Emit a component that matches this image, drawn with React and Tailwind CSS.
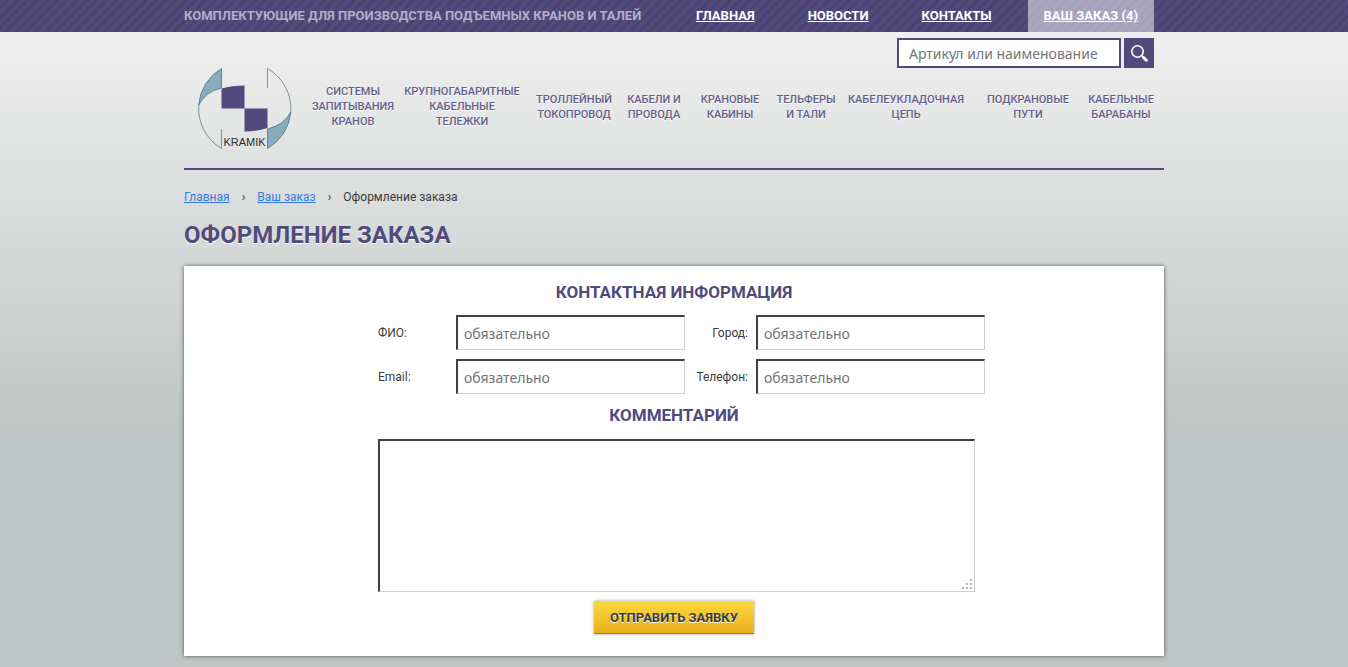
import React from "react";

const menu = [
  ["Главная", "/"],
  ["Новости", "/news"],
  ["Контакты", "/contacts"],
];

const catalog = [
  ["Системы", "запитывания", "кранов"],
  ["Крупногабаритные", "кабельные", "тележки"],
  ["Троллейный", "токопровод"],
  ["Кабели и", "провода"],
  ["Крановые", "кабины"],
  ["Тельферы", "и тали"],
  ["Кабелеукладочная", "цепь"],
  ["Подкрановые", "пути"],
  ["Кабельные", "барабаны"],
];

const Logo = () => (
  <svg width="94" height="82" viewBox="0 0 94 82" role="img" aria-label="Kramik">
    <path d="M23.5 .5A46.5 46.5 0 0 0 .7 37Q7 24 23.5 20Z" fill="#88acb9" stroke="#4f7480" strokeWidth=".8" />
    <path d="M69.5 80.5A46.5 46.5 0 0 0 92.8 44Q86 57 69.5 61Z" fill="#88acb9" stroke="#4f7480" strokeWidth=".8" />
    <path
      d="M69.5 20V.5A46.5 46.5 0 0 1 92.8 44M23.5 61V80.5A46.5 46.5 0 0 1 .7 37"
      fill="none"
      stroke="#8b8f92"
    />
    <path d="M23.5 20.5Q34 17.5 46.5 17.5V40.5H69.5V60Q59 63.5 46.5 63.5V40.5H23.5Z" fill="#524a7c" />
    <text x="46.5" y="78" textAnchor="middle" fontSize="11" fill="#2b2b2b" fontFamily="'Liberation Sans', sans-serif">
      KRAMIK
    </text>
  </svg>
);

const Field = ({ id, label, type = "text", right }) => (
  <>
    <label htmlFor={id} className={right ? "pr-2 text-right" : ""}>
      {label}:
    </label>
    <input
      id={id}
      type={type}
      placeholder="обязательно"
      className="h-[35px] w-full min-w-0 border-t-2 border-l-2 border-r border-b border-t-[#414141] border-l-[#414141] border-r-[#cfcfc6] border-b-[#cfcfc6] bg-white px-1.5 font-['Noto_Sans',sans-serif] text-sm outline-none placeholder:text-[#757575]"
    />
  </>
);

const App = () => {
  return (
    <div className="min-h-screen bg-[#bfc5c4] bg-[linear-gradient(#efefef_32px,#bfc5c4_435px)] pb-2.5 font-['Roboto',sans-serif] text-xs text-[#3b3b3b]">
      <header>
        {/* Top bar */}
        <div className="bg-[#524a7c] bg-[repeating-linear-gradient(135deg,#524a7c_0px,#524a7c_4px,#49436c_5px,#49436c_6px,#524a7c_7px)]">
          <div className="mx-auto flex h-8 max-w-[980px] items-center justify-between pr-2.5 text-[13px] font-bold uppercase">
            <p className="whitespace-nowrap text-[#b3aec6]">
              Комплектующие для производства подъемных кранов и талей
            </p>
            <nav className="flex h-full gap-[19px] whitespace-nowrap text-white">
              {menu.map(([name, href]) => (
                <a key={href} href={href} className="flex items-center px-[17px] underline">
                  {name}
                </a>
              ))}
              <a href="/cart" className="flex items-center bg-white/50 px-4 underline">
                Ваш заказ (4)
              </a>
            </nav>
          </div>
        </div>

        <div className="mx-auto max-w-[980px] border-b-2 border-[#524a7c] pt-1.5">
          <form className="flex justify-end gap-[3px] pr-2.5">
            <input
              type="text"
              aria-label="Поиск"
              placeholder="Артикул или наименование"
              className="h-[30px] w-56 border-2 border-[#524a7c] bg-white px-2.5 font-['Noto_Sans',sans-serif] text-sm outline-none placeholder:text-[#757575]"
            />
            <button type="submit" aria-label="Найти" className="flex size-[30px] items-center justify-center bg-[#524a7c]">
              <svg width="18" height="18" viewBox="0 0 18 18" fill="none" stroke="#fff">
                <circle cx="7.5" cy="7.5" r="5.7" strokeWidth="1.6" />
                <path d="M11.5 11.5L13 13" strokeWidth="1.6" />
                <path d="M13.5 13.5L16.3 16.3" strokeWidth="3" strokeLinecap="round" />
              </svg>
            </button>
          </form>

          <div className="flex h-[100px] items-start pr-[3px] pl-3.5">
            <a href="/" className="shrink-0">
              <Logo />
            </a>
            <nav className="ml-[15px] grid h-[77px] flex-1 grid-cols-[92fr_126fr_98fr_62fr_90fr_62fr_138fr_106fr_80fr] items-center text-center text-[11px] leading-[15px] font-medium text-[#65608a] uppercase [text-shadow:0_1px_0_#fff]">
              {catalog.map((lines) => (
                <a key={lines[0]} href="#catalog" className="flex flex-col items-center whitespace-nowrap">
                  {lines.map((line) => (
                    <span key={line}>{line}</span>
                  ))}
                </a>
              ))}
            </nav>
          </div>
        </div>
      </header>

      <main className="mx-auto max-w-[980px]">
        <nav className="flex gap-3 pt-[17px] leading-5">
          <a href="/" className="text-[#357ae0] underline">Главная</a>
          <span className="font-bold text-[#524a7c]">›</span>
          <a href="/cart" className="text-[#357ae0] underline">Ваш заказ</a>
          <span className="font-bold text-[#524a7c]">›</span>
          <span>Оформление заказа</span>
        </nav>

        <h1 className="mt-3 mb-[15px] text-2xl leading-8 font-bold text-[#524a7c] uppercase [text-shadow:0_1px_0_#fff]">
          Оформление заказа
        </h1>

        {/* Order form */}
        <form className="bg-white px-2 pt-3.5 pb-[22px] shadow-[0_0_4px_#555]">
          <h2 className="text-center text-[17px] leading-6 font-bold text-[#524a7c] uppercase">
            Контактная информация
          </h2>
          <div className="mx-auto max-w-[592px]">
            <div className="-mr-[15px] mt-[11px] grid grid-cols-[78px_1fr_71px_1fr] items-center gap-y-[9px]">
              <Field id="name" label="ФИО" />
              <Field id="city" label="Город" right />
              <Field id="email" label="Email" type="email" />
              <Field id="phone" label="Телефон" type="tel" right />
            </div>
            <h2 className="mt-[9px] mb-3 text-center text-[17px] leading-6 font-bold text-[#524a7c] uppercase">
              <label htmlFor="comment">Комментарий</label>
            </h2>
            <div className="relative -mr-[5px]">
              <textarea
                id="comment"
                className="block h-[153px] w-full resize-none border-t-2 border-l-2 border-r border-b border-t-[#414141] border-l-[#414141] border-r-[#cfcfc6] border-b-[#cfcfc6] bg-white p-1.5 outline-none"
              />
              <svg className="pointer-events-none absolute right-0.5 bottom-0.5" width="12" height="12" fill="#b8b5b8">
                <path d="M9 1h2v2h-2zM5 5h2v2h-2zM9 5h2v2h-2zM1 9h2v2h-2zM5 9h2v2h-2zM9 9h2v2h-2z" />
              </svg>
            </div>
          </div>
          <button
            type="submit"
            className="mx-auto mt-[9px] block h-[33px] border-b border-[#b8720f] bg-linear-to-b from-[#fad83c] to-[#e9b01c] px-4 pt-0.5 text-[13px] font-bold text-[#3b3b3b] uppercase shadow-[0_0_3px_#999] [text-shadow:0_1px_0_#fff]"
          >
            Отправить заявку
          </button>
        </form>
      </main>
    </div>
  );
};

export default App;
